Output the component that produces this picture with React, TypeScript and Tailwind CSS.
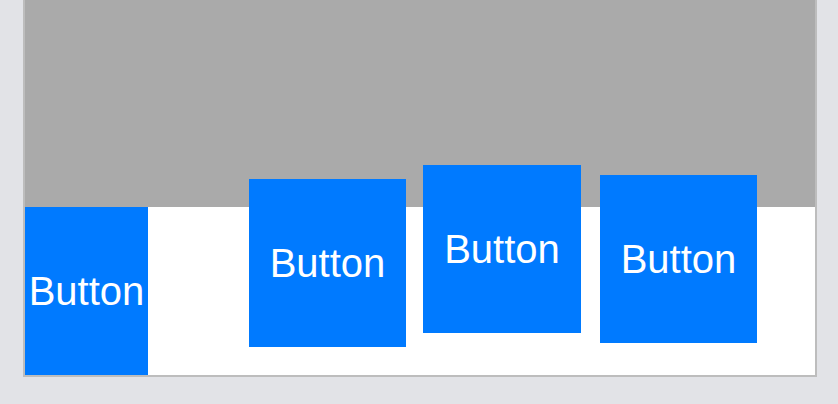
import React from "react";

const buttons = [
  { label: "Button", cls: "w-[123px] mb-0 ml-0" },
  { label: "Button", cls: "w-[157px] mb-[28px] ml-[101px]" },
  { label: "Button", cls: "w-[158px] mb-[42px] ml-[17px]" },
  { label: "Button", cls: "w-[157px] mb-[32px] ml-[19px]" },
];

export default function App() {
  return (
    <div className="min-h-screen w-full bg-[#e2e3e7] font-['Liberation_Sans',Arial,sans-serif]">
      <div className="ml-[23px] w-[794px] h-[377px] border-2 border-t-0 border-[#bdbdbd]">
        <div className="flex h-full items-end bg-[linear-gradient(to_bottom,#aaaaaa_207px,#ffffff_207px)]">
          {buttons.map((b, i) => (
            <button
              key={i}
              className={`${b.cls} h-[168px] shrink-0 bg-[#007aff] text-white text-[40px] leading-none flex items-center justify-center whitespace-nowrap`}
            >
              {b.label}
            </button>
          ))}
        </div>
      </div>
    </div>
  );
}
